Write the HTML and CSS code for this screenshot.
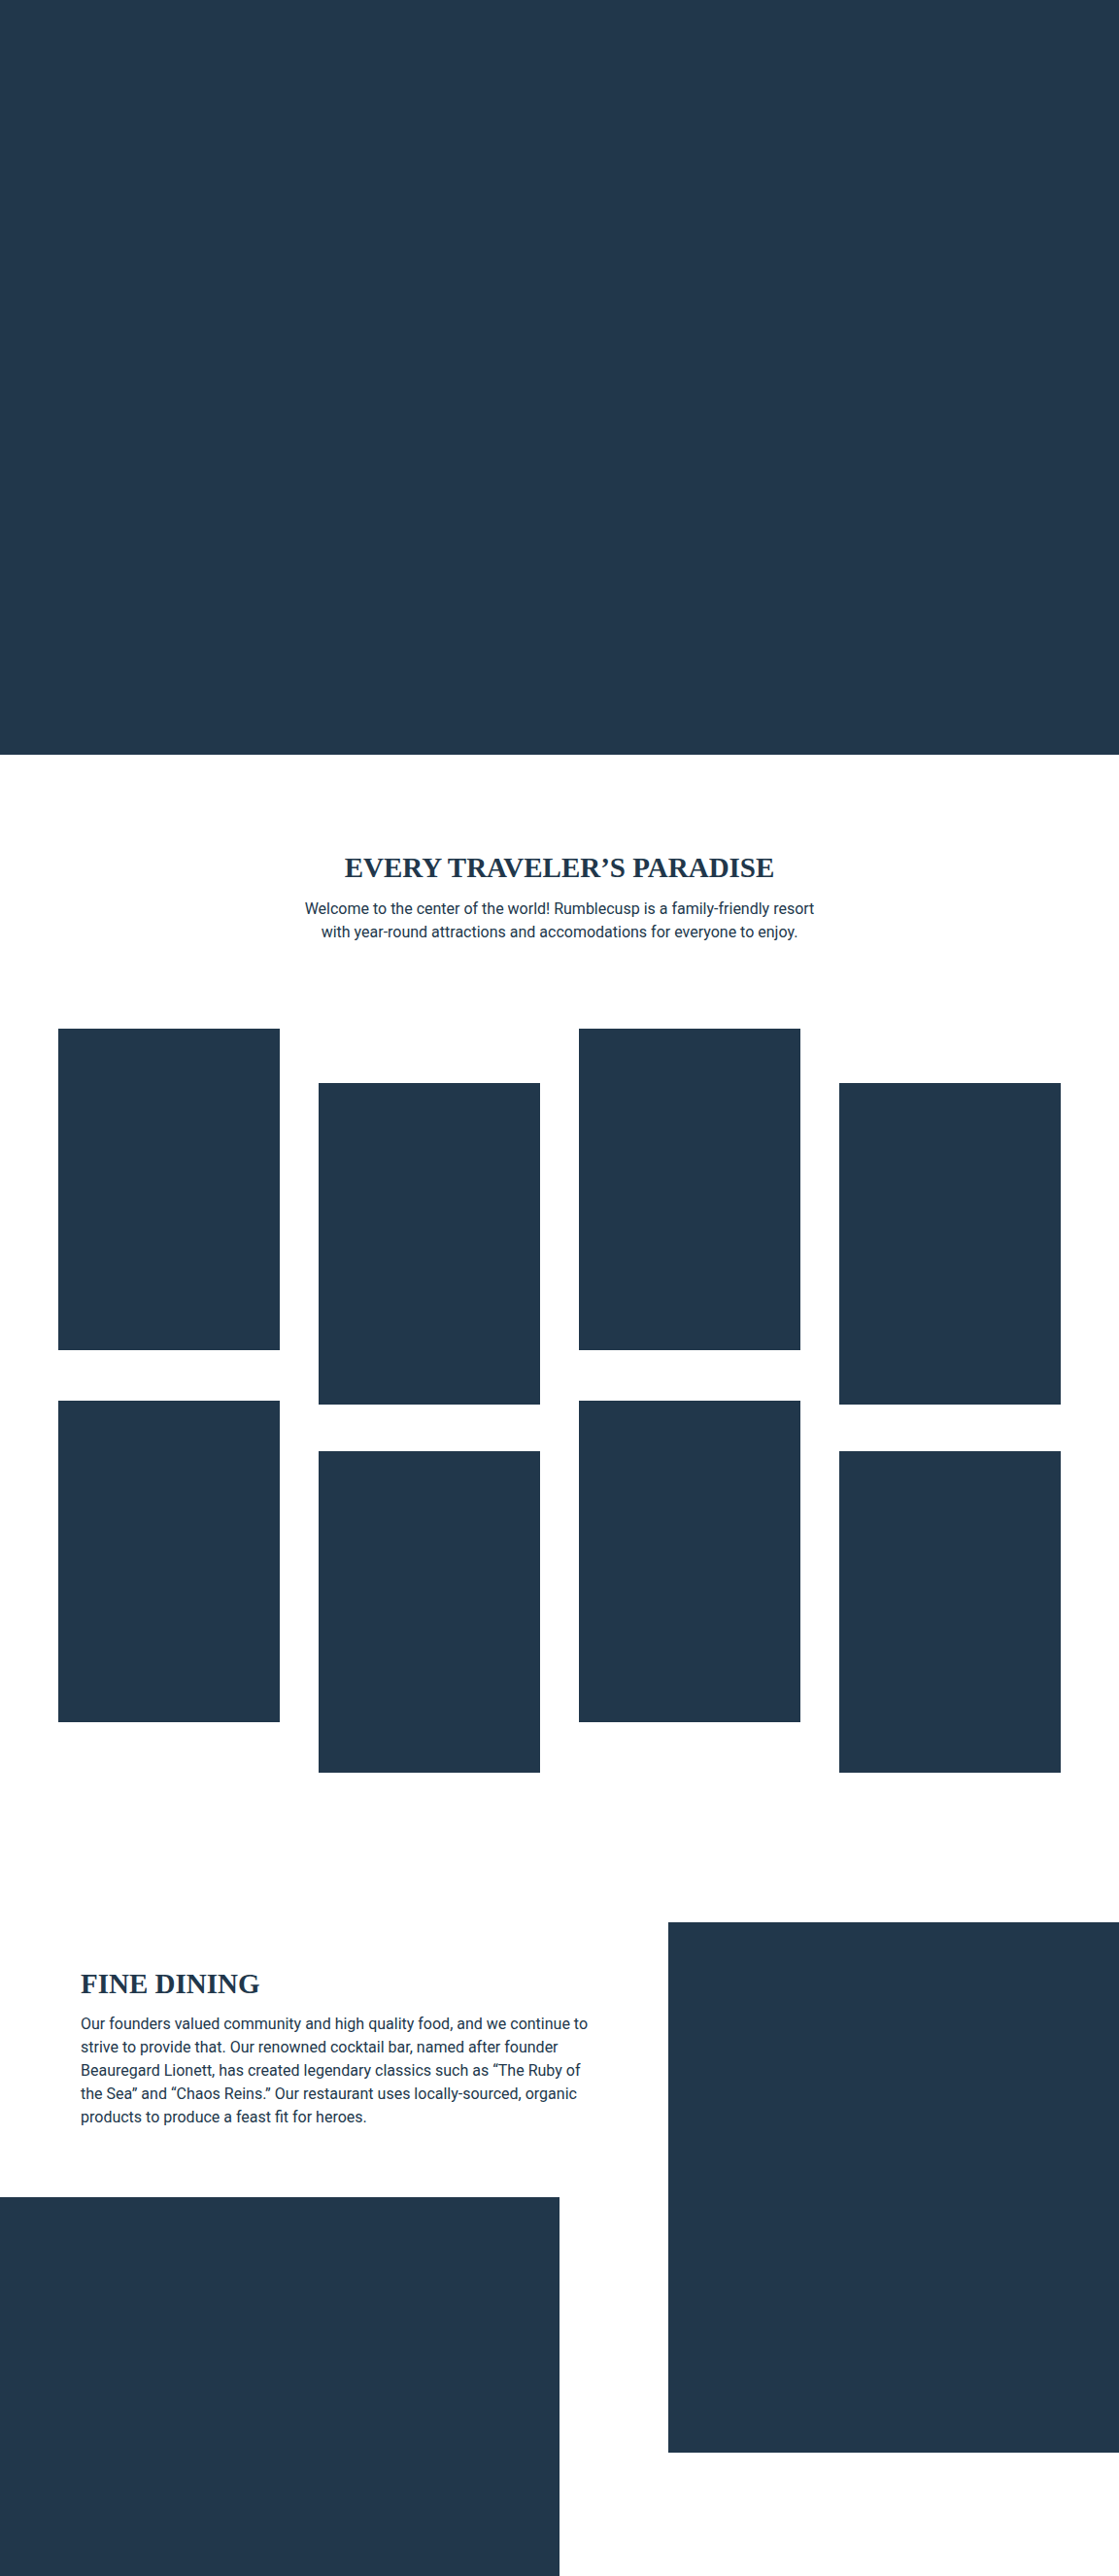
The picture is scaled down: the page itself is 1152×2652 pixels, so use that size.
FILE: index.html
```html
<!DOCTYPE html>
<html lang="en">
<head>
<meta charset="utf-8">
<title>Rumblecusp</title>
<link rel="stylesheet" href="styles.css">
</head>
<body>
<header class="hero"></header>

<section class="intro">
  <h1 class="title">EVERY TRAVELER’S PARADISE</h1>
  <p class="lead">Welcome to the center of the world! Rumblecusp is a family-friendly resort with year-round attractions and accomodations for everyone to enjoy.</p>
</section>

<section class="gallery">
  <div class="gallery-col">
    <div class="tile"></div>
    <div class="tile"></div>
  </div>
  <div class="gallery-col gallery-col--offset">
    <div class="tile"></div>
    <div class="tile"></div>
  </div>
  <div class="gallery-col">
    <div class="tile"></div>
    <div class="tile"></div>
  </div>
  <div class="gallery-col gallery-col--offset">
    <div class="tile"></div>
    <div class="tile"></div>
  </div>
</section>

<section class="dining">
  <div class="dining-left">
    <div class="dining-text">
      <h2 class="title">FINE DINING</h2>
      <p class="body-text">Our founders valued community and high quality food, and we continue to strive to provide that. Our renowned cocktail bar, named after founder Beauregard Lionett, has created legendary classics such as “The Ruby of the Sea” and “Chaos Reins.” Our restaurant uses locally-sourced, organic products to produce a feast fit for heroes.</p>
    </div>
    <div class="dining-photo dining-photo--left"></div>
  </div>
  <div class="dining-right">
    <div class="dining-photo dining-photo--right"></div>
  </div>
</section>
</body>
</html>
```

FILE: styles.css
```css
html, body {
  margin: 0;
  padding: 0;
  background: #ffffff;
}

body {
  font-family: Roboto, "Liberation Sans", sans-serif;
  color: #21374b;
  overflow-x: hidden;
}

.hero {
  height: 777px;
  background: #21374b;
}

.title {
  margin: 0;
  font-family: "Liberation Serif", "Times New Roman", serif;
  font-weight: 700;
  font-size: 29px;
  line-height: 36px;
  color: #21374b;
}

.intro {
  padding: 98px 0 87px;
  text-align: center;
}

.lead {
  width: 540px;
  margin: 13px auto 0;
  font-size: 16px;
  line-height: 24px;
}

.gallery {
  display: flex;
  gap: 40px;
  padding: 0 60px 154px;
}

.gallery-col {
  width: 228px;
  display: flex;
  flex-direction: column;
  gap: 52px;
}

.gallery-col--offset {
  padding-top: 56px;
  gap: 48px;
}

.tile {
  height: 331px;
  background: #21374b;
}

.dining {
  display: flex;
  align-items: flex-start;
}

.dining-left {
  width: 576px;
  flex: none;
}

.dining-text {
  padding: 45px 0 0 83px;
  width: 532px;
}

.body-text {
  margin: 12px 0 0;
  font-size: 16px;
  line-height: 24px;
}

.dining-photo {
  background: #21374b;
}

.dining-photo--left {
  margin-top: 70px;
  height: 390px;
}

.dining-right {
  flex: 1;
  margin-left: 112px;
}

.dining-photo--right {
  height: 546px;
}
```
